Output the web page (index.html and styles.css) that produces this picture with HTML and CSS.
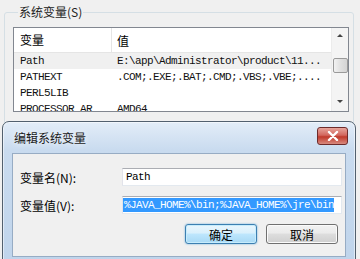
FILE: index.html
```html
<!DOCTYPE html>
<html>
<head>
  <meta charset="utf-8">
  <title>环境变量</title>
  <link rel="stylesheet" href="styles.css">
</head>
<body>
  <!-- System variables group (background window) -->
  <fieldset class="group">
    <legend>系统变量(S)</legend>
    <div class="listbox">
      <div class="list-body">
        <div class="list-header">
          <div class="col-name">变量</div>
          <div class="col-value">值</div>
        </div>
        <div class="list-row selected">
          <div class="col-name">Path</div>
          <div class="col-value">E:\app\Administrator\product\11...</div>
        </div>
        <div class="list-row">
          <div class="col-name">PATHEXT</div>
          <div class="col-value">.COM;.EXE;.BAT;.CMD;.VBS;.VBE;....</div>
        </div>
        <div class="list-row">
          <div class="col-name">PERL5LIB</div>
          <div class="col-value"></div>
        </div>
        <div class="list-row">
          <div class="col-name">PROCESSOR_AR</div>
          <div class="col-value">AMD64</div>
        </div>
      </div>
      <div class="scrollbar">
        <div class="arrow up"></div>
        <div class="thumb"></div>
        <div class="arrow down"></div>
      </div>
    </div>
  </fieldset>

  <!-- Edit dialog -->
  <div class="dialog">
    <div class="titlebar">
      <span class="title">编辑系统变量</span>
      <button class="close-btn">
        <svg width="12" height="10" viewBox="0 0 12 10">
          <path d="M2 1 L10 9 M10 1 L2 9" stroke="#fff" stroke-width="2.4" stroke-linecap="round"/>
        </svg>
      </button>
    </div>
    <div class="client">
      <div class="form-row">
        <label>变量名(N):</label>
        <div class="textbox">Path</div>
      </div>
      <div class="form-row">
        <label>变量值(V):</label>
        <div class="textbox"><span class="sel">%JAVA_HOME%\bin;%JAVA_HOME%\jre\bin</span></div>
      </div>
      <div class="buttons">
        <button class="btn default">确定</button>
        <button class="btn">取消</button>
      </div>
    </div>
  </div>
</body>
</html>
```

FILE: styles.css
```css
* { box-sizing: border-box; }

body {
  margin: 0;
  width: 360px;
  height: 259px;
  overflow: hidden;
  position: relative;
  background: #f0f0f0;
  font-family: "Noto Sans CJK SC", "Liberation Sans", sans-serif;
  font-size: 12px;
  color: #000;
}

.group {
  margin: 5px 6px 0 4px;
  padding: 0 4px 0 8px;
  border: 1px solid #d5dfe5;
  border-radius: 3px;
  height: 130px;
}

.group legend {
  padding: 0 1px;
  margin-left: 5px;
  line-height: 14px;
  height: 14px;
  color: #222;
}

.listbox {
  margin-top: 8px;
  display: flex;
  border: 1px solid #828790;
  background: #fff;
  height: 85px;
  overflow: hidden;
}

.list-body {
  flex: 1;
}

.list-header {
  display: flex;
  height: 25px;
  align-items: center;
  border-bottom: 1px solid #e5e5e5;
}

.list-header .col-name {
  border-right: 1px solid #e5e5e5;
  height: 25px;
  line-height: 24px;
}

.list-row {
  display: flex;
  height: 16px;
  align-items: center;
  font-family: "Liberation Mono", monospace;
  font-size: 11px;
  letter-spacing: -0.6px;
  color: #111;
}

.list-row.selected {
  background: #f0f0f0;
}

.col-name {
  width: 98px;
  padding-left: 6px;
  white-space: nowrap;
  overflow: hidden;
}

.col-value {
  padding-left: 5px;
  white-space: nowrap;
}

.scrollbar {
  width: 17px;
  background: #f4f4f4;
  border-left: 1px solid #ececec;
  display: flex;
  flex-direction: column;
  align-items: center;
  padding-top: 6px;
}

.arrow {
  width: 0;
  height: 0;
  border-left: 3px solid transparent;
  border-right: 3px solid transparent;
}

.arrow.up {
  border-bottom: 3px solid #444;
}

.arrow.down {
  border-top: 3px solid #444;
  margin-top: 27px;
}

.thumb {
  width: 15px;
  height: 15px;
  margin-top: 21px;
  border: 1px solid #9a9a9a;
  border-radius: 2px;
  background: linear-gradient(90deg, #f2f2f2, #e0e0e0 50%, #d4d4d4);
}

.dialog {
  position: absolute;
  left: 2px;
  top: 121px;
  width: 354px;
  height: 150px;
  border: 1px solid #52606e;
  border-radius: 7px 7px 0 0;
  background: linear-gradient(#e3edf8, #c9dbef 28px, #bfd4eb);
  padding: 0 9px;
  box-shadow: inset 0 0 0 1px rgba(255,255,255,0.5);
}

.titlebar {
  height: 31px;
  display: flex;
  align-items: center;
  justify-content: space-between;
}

.title {
  padding-left: 2px;
  color: #1a1a1a;
  text-shadow: 0 0 6px #fff;
}

.close-btn {
  width: 31px;
  height: 18px;
  margin: -3px -2px 0 0;
  padding: 0;
  border: 1px solid #6d2b2b;
  border-radius: 3px;
  background: linear-gradient(#e7a59c, #d2675e 45%, #c0392b 55%, #d88a7f);
  display: flex;
  align-items: center;
  justify-content: center;
}

.client {
  background: #f0f0f0;
  border: 1px solid #97acc4;
  height: 104px;
  padding: 14px 3px 0 7px;
}

.form-row {
  display: flex;
  align-items: center;
  margin-bottom: 10px;
}

.form-row label {
  width: 102px;
}

.textbox {
  width: 220px;
  height: 18px;
  background: #fff;
  border: 1px solid #abadb3;
  border-color: #abadb3 #e3e9ef #e3e9ef #e2e3ea;
  font-family: "Liberation Mono", monospace;
  font-size: 11px;
  letter-spacing: -0.6px;
  line-height: 16px;
  padding-left: 3px;
  white-space: nowrap;
  overflow: hidden;
}

.sel {
  display: inline-block;
  background: #3399ff;
  color: #fff;
  line-height: 14px;
  margin-top: 1px;
  margin-left: -3px;
  padding-left: 1px;
}

.buttons {
  display: flex;
  justify-content: flex-end;
  gap: 9px;
  margin-top: 3px;
  padding-right: 4px;
}

.btn {
  width: 72px;
  height: 20px;
  padding: 0;
  font-family: "Noto Sans CJK SC", sans-serif;
  font-size: 12px;
  border: 1px solid #707070;
  border-radius: 3px;
  background: linear-gradient(#f2f2f2, #ebebeb 45%, #dddddd 50%, #cfcfcf);
  box-shadow: inset 0 0 0 1px #fbfbfb;
}

.btn.default {
  border-color: #3c7fb1;
  background: linear-gradient(#eaf6fd, #d9f0fc 45%, #bee6fd 50%, #a7d9f5);
  box-shadow: inset 0 0 0 1px #c7ecfc, 0 0 2px #60a8d8;
}
```
